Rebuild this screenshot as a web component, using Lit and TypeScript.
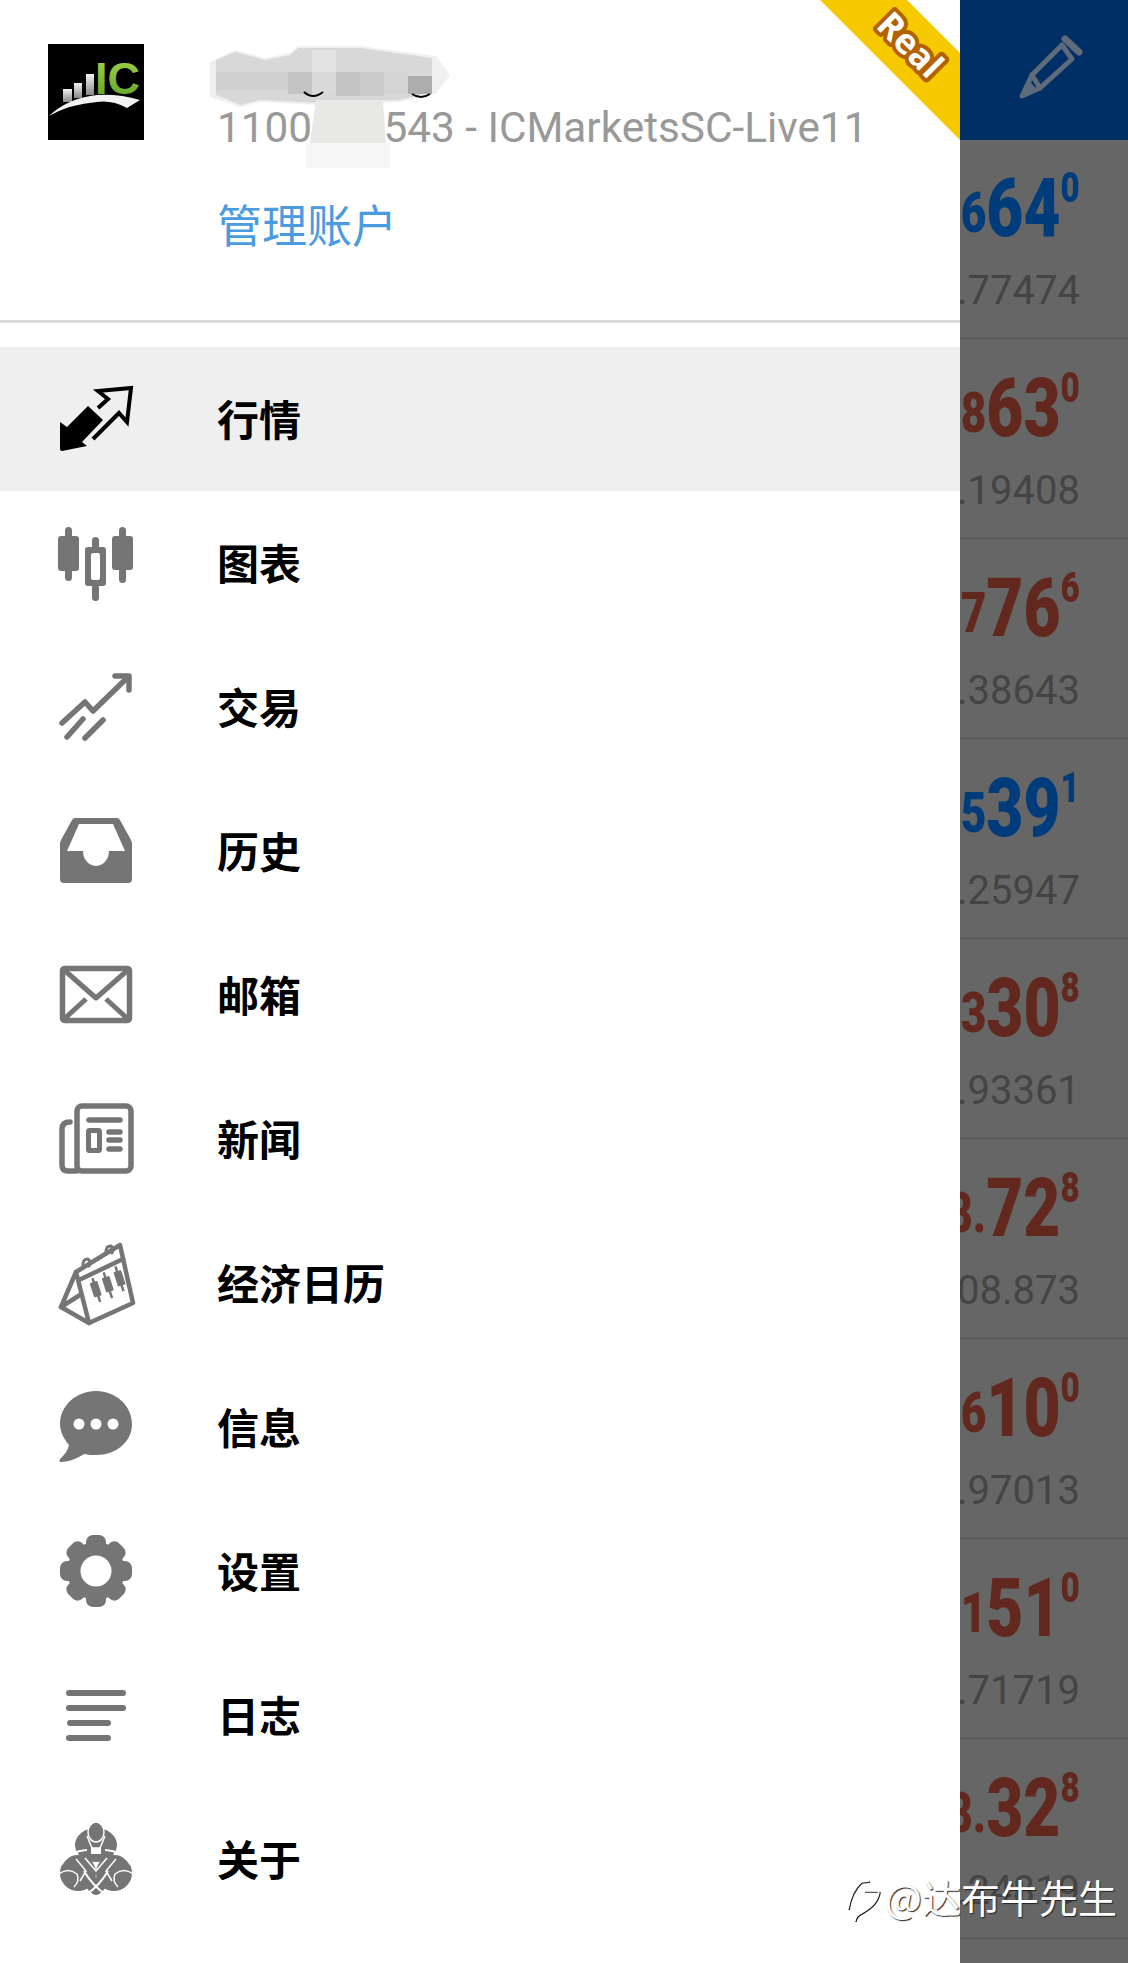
import { LitElement, html, css, svg } from "lit";
import { customElement } from "lit/decorators.js";

const G = "#757575";
const icons = [
  svg`<path d="M10 53 L17 58 L38 37 L53 51 L32 73 L37 77 L12 82 Q10 82 10 80 Z" fill="#000"/><path d="M48 39 L58 30 L48 22 L81 19 L77 53 L69 44 L43 70" fill="none" stroke="#000" stroke-width="4"/>`,
  svg`<g fill="${G}"><rect x="8" y="23" width="21" height="35" rx="3"/><rect x="15" y="14" width="7" height="54" rx="3.5"/><rect x="62" y="23" width="21" height="34" rx="3"/><rect x="69" y="14" width="7" height="56" rx="3.5"/><rect x="42" y="24" width="7" height="12" rx="3.5"/><rect x="42" y="71" width="7" height="17" rx="3.5"/><path fill-rule="evenodd" d="M38 34 H53 a3 3 0 0 1 3 3 V70 a3 3 0 0 1 -3 3 H38 a3 3 0 0 1 -3 -3 V37 a3 3 0 0 1 3 -3 Z M43 40 a2 2 0 0 0 -2 2 V65 a2 2 0 0 0 2 2 H48 a2 2 0 0 0 2 -2 V42 a2 2 0 0 0 -2 -2 Z"/></g>`,
  svg`<g fill="none" stroke="${G}" stroke-width="5.5" stroke-linecap="round" stroke-linejoin="round"><path d="M12 66 L35 45 L43 54 L77 21"/><path d="M65 19 H79 V33"/><path d="M33 62 L17 80"/><path d="M53 63 L35 81"/></g>`,
  svg`<path fill="${G}" fill-rule="evenodd" d="M25 17 H67 Q69 17 70 19 L81 39 Q82 41 82 43 V78 Q82 82 78 82 H14 Q10 82 10 78 V43 Q10 41 11 39 L22 19 Q23 17 25 17 Z M29 23 L17 50 H33 A13 15 0 0 0 59 50 H75 L63 23 Z"/>`,
  svg`<rect x="12.5" y="23.5" width="67" height="52" rx="2" fill="none" stroke="${G}" stroke-width="5.5"/><g fill="none" stroke="${G}" stroke-width="5" stroke-linejoin="round"><path d="M13 24 L46 53 L79 24"/><path d="M13 75 L36 54"/><path d="M79 75 L56 54"/></g>`,
  svg`<g fill="none" stroke="${G}" stroke-width="5.5" stroke-linecap="round"><rect x="27" y="17" width="54" height="65" rx="5"/><path d="M20 33 Q12 33 12 40 V76 Q12 82 18 82 H27"/><path d="M39 31 H70"/><path d="M59 43 H70"/><path d="M59 51 H70"/><path d="M59 60 H70"/><rect x="38.5" y="41.5" width="11" height="20" rx="1" stroke-width="5"/></g>`,
  svg`<g fill="none" stroke="${G}" stroke-width="4.5" stroke-linejoin="round" stroke-linecap="round"><path d="M26 39 L70 12 L83 70 L39 90 Z"/><path d="M26 39 L11 74 L39 90"/><path d="M11 74 L30 62"/><path d="M29 47 L73 26"/><path d="M33 34 Q32 26 38 26 Q41 28 39 33" stroke-width="3"/><path d="M56 21 Q55 13 61 13 Q64 15 62 20" stroke-width="3"/></g><g fill="${G}" transform="rotate(-18 57 52)"><rect x="41" y="45" width="8" height="15" rx="1"/><rect x="44" y="41" width="2.500" height="25"/><rect x="54" y="44" width="8" height="15" rx="1"/><rect x="56.500" y="39" width="2.500" height="27"/><rect x="67" y="42" width="8" height="15" rx="1"/><rect x="69.500" y="37" width="2.500" height="26"/></g>`,
  svg`<path fill="${G}" d="M46 14 C66 14 82 29 82 47 C82 65 66 78 46 78 C42 78 38 78 34 77 C28 81 19 85 11 85 C9 85 9 83 11 81 C15 77 18 73 19 68 C14 62 10 55 10 47 C10 29 26 14 46 14 Z"/><g fill="#fff"><circle cx="29" cy="47" r="5.5"/><circle cx="46" cy="47" r="5.5"/><circle cx="63" cy="47" r="5.5"/></g>`,
  svg`<g fill="${G}">${[0, 45, 90, 135, 180, 225, 270, 315].map((a) => svg`<rect x="36" y="14" width="20" height="20" rx="7" transform="rotate(${a} 46 50)"/>`)}<circle cx="46" cy="50" r="29"/></g><circle cx="46" cy="50" r="15.500" fill="#fff"/>`,
  svg`<g stroke="${G}" stroke-width="6" stroke-linecap="round"><path d="M19 28 H73"/><path d="M19 43 H73"/><path d="M20 58 H58"/><path d="M19 73 H58"/></g>`,
  svg`<g fill="${G}"><ellipse cx="46" cy="36" rx="21" ry="17"/><circle cx="28" cy="64" r="18"/><circle cx="64" cy="64" r="18"/><path d="M34 76 L46 68 L58 76 Q50 86 46 86 Q42 86 34 76 Z"/></g><g fill="none" stroke="#fff" stroke-width="1.500" stroke-linejoin="round"><ellipse cx="46" cy="23" rx="8" ry="10" fill="${G}"/><path d="M37 27 L42 39 H50 L55 27"/><rect x="41" y="39" width="10" height="6" fill="#fff" stroke="none"/><path d="M11 56 Q20 42 37 41 M81 56 Q72 42 55 41" stroke-width="2"/><path d="M35 49 L46 62 L57 49"/><path d="M26 50 L36 62 L30 72 M66 50 L56 62 L62 72"/><path d="M9 65 Q18 58 27 65 Q30 72 24 78 M83 65 Q74 58 65 65 Q62 72 68 78"/><path d="M34 62 Q42 76 56 86 M58 62 Q50 76 36 86" stroke-width="2"/></g>`,
];

const labels = ["行情", "图表", "交易", "历史", "邮箱", "新闻", "经济日历", "信息", "设置", "日志", "关于"];

const quotes: [string, string, string, string, string][] = [
  ["6", "64", "0", ".77474", "b"],
  ["8", "63", "0", ".19408", "r"],
  ["7", "76", "6", ".38643", "r"],
  ["5", "39", "1", ".25947", "b"],
  ["3", "30", "8", ".93361", "r"],
  ["8.", "72", "8", "08.873", "r"],
  ["6", "10", "0", ".97013", "r"],
  ["1", "51", "0", ".71719", "r"],
  ["8.", "32", "8", ".24819", "r"],
];

@customElement("app-root")
export class AppRoot extends LitElement {
  static styles = css`
    :host { display: block; width: 1128px; height: 1963px; position: relative; overflow: hidden; }
    * { box-sizing: border-box; }
    .page { display: flex; height: 1963px; font-family: Roboto, "Noto Sans CJK SC", sans-serif; }
    .drawer { width: 960px; flex: none; background: #fff; position: relative; }
    .head { height: 323px; border-bottom: 3px solid #dcdcdc; display: flex; padding: 44px 0 0 48px; margin-bottom: 24px; }
    .logo { width: 96px; height: 96px; background: #000; flex: none; display: block; }
    .head-text { margin-left: 73px; padding-top: 59px; }
    .acct { font-size: 42.3px; line-height: 50px; color: #999; font-weight: 400; white-space: nowrap; }
    .manage { margin-top: 44px; font-size: 45px; line-height: 54px; color: #4a9be0; font-family: "Noto Sans CJK SC", sans-serif; }
    .row { height: 144px; display: flex; align-items: center; padding-left: 50px; }
    .row.active { background: #efefef; }
    .row svg { width: 90px; height: 100px; flex: none; display: block; }
    .row span { margin: -2px 0 0 77px; font: 700 42px/1 "Noto Sans CJK SC", sans-serif; color: #000; }
    .mosaic { position: absolute; left: 200px; top: 40px; display: block; }
    .ribbon { position: absolute; right: 0; top: 0; display: block; }
    .ribbon text { font: 700 35px "Open Sans", sans-serif; fill: #fff; stroke: #b36200; stroke-width: 8px; paint-order: stroke; stroke-linejoin: round; }
    .panel { flex: 1; min-width: 0; background: #666; overflow: hidden; }
    .top { height: 140px; background: #002f66; display: flex; align-items: center; justify-content: center; }
    .top svg { width: 90px; height: 100px; display: block; }
    .q { height: 200px; border-bottom: 3px solid #5c5c5c; padding-right: 48px; display: flex; flex-direction: column; align-items: flex-end; white-space: nowrap; }
    .big { height: 122px; display: flex; align-items: flex-start; justify-content: flex-end; font-weight: 900; transform: scaleX(0.79); transform-origin: right top; }
    .big .a { font-size: 56px; line-height: 72px; margin-top: 37px; }
    .big .b { font-size: 81px; line-height: 80px; margin-top: 29px; }
    .big .c { font-size: 42px; line-height: 44px; margin-top: 26px; }
    .b-c { color: #003c7c; }
    .r-c { color: #62271d; }
    .sub { font-size: 40px; line-height: 48px; color: #444; margin-top: -24px; padding-top: 29px; }
    .mark { position: absolute; left: 843px; top: 1869px; display: flex; align-items: center; font: 400 39px/48px "Noto Sans CJK SC", sans-serif; color: #fff; text-shadow: 1px 1px 1px #222; }
    .mark svg { display: block; filter: drop-shadow(1px 1px 0.5px #222); margin-top: 10px; }
  `;

  render() {
    return html`
      <div class="page">
        <div class="drawer">
          <div class="head">
            <svg class="logo" viewBox="0 0 96 96">
              <defs>
                <linearGradient id="bar" x1="0" y1="0" x2="0" y2="1"><stop offset="0" stop-color="#f4f4f4"/><stop offset="1" stop-color="#888"/></linearGradient>
                <linearGradient id="gr" x1="0" y1="0" x2="0" y2="1"><stop offset="0" stop-color="#a8d44a"/><stop offset="1" stop-color="#5aa024"/></linearGradient>
              </defs>
              <rect x="15" y="45" width="9" height="13" fill="url(#bar)"/>
              <rect x="26" y="39" width="8" height="15" fill="url(#bar)"/>
              <rect x="38" y="30" width="8" height="21" fill="url(#bar)"/>
              <text x="47" y="50" font-family="Liberation Sans" font-weight="700" font-size="45" fill="url(#gr)">IC</text>
              <path d="M1 72 Q20 54 49 51 Q72 50 92 56 L79 64 Q64 56 49 58 Q22 60 1 72 Z" fill="#f2f2f2"/>
            </svg>
            <div class="head-text">
              <div class="acct">1100000543 - ICMarketsSC-Live11</div>
              <div class="manage">管理账户</div>
            </div>
          </div>
          ${labels.map(
            (l, i) => html`<div class="row ${i === 0 ? "active" : ""}">
              <svg viewBox="0 0 90 100">${icons[i]}</svg>
              <span>${l}</span>
            </div>`
          )}
          <svg class="mosaic" width="260" height="140" viewBox="200 40 260 140">
            <path d="M210 62 L235 50 L265 58 L290 53 L298 46 L360 46 L436 56 L450 75 L436 94 L400 102 L320 105 L260 102 L240 107 L210 97 Z" fill="#f0f0f0"/>
            <path d="M216 60 L235 52 L265 60 L290 55 L298 48 L360 48 L432 58 L432 92 L400 100 L320 103 L260 100 L240 105 L216 95 Z" fill="#d8d8d8"/>
            <rect x="216" y="72" width="72" height="18" fill="#cfcfcf"/>
            <rect x="288" y="72" width="24" height="22" fill="#c4c4c4"/>
            <rect x="312" y="50" width="24" height="22" fill="#e3e3e3"/>
            <rect x="312" y="72" width="24" height="22" fill="#dadada"/>
            <rect x="336" y="72" width="24" height="24" fill="#c4c4c4"/>
            <rect x="360" y="72" width="24" height="24" fill="#cbcbcb"/>
            <rect x="384" y="72" width="24" height="22" fill="#d4d4d4"/>
            <rect x="408" y="76" width="24" height="18" fill="#adadad"/>
            <path d="M316 100 H383 L386 143 H310 Z" fill="#e8e8e6"/>
            <rect x="306" y="143" width="84" height="25" fill="#f6f6f6"/>
            <path d="M304 92 Q313 100 323 92 M412 94 Q421 100 430 94" fill="none" stroke="#000" stroke-width="2"/>
          </svg>
          <svg class="ribbon" width="140" height="140" viewBox="820 0 140 140">
            <path d="M820 0 H907 L960 53 V140 Z" fill="#f6c900"/>
            <text x="910" y="57" text-anchor="middle" transform="rotate(45 910 45)">Real</text>
          </svg>
        </div>
        <div class="panel">
          <div class="top">
            <svg viewBox="0 0 90 100"><g fill="none" stroke="#5f6a7b" stroke-width="5" stroke-linejoin="round" stroke-linecap="round"><path d="M23 76 L33 55 L63 25 L73 39 L41 68 Z"/><path d="M33 55 L41 68"/><path d="M66 19 L80 32" stroke-width="7"/></g><path d="M23 76 L30 60 L38 70 Z" fill="#5f6a7b"/></svg>
          </div>
          ${quotes.map(
            ([a, b, c, s, col]) => html`<div class="q">
              <div class="big ${col}-c"><span class="a">${a}</span><span class="b">${b}</span><span class="c">${c}</span></div>
              <div class="sub">${s}</div>
            </div>`
          )}
        </div>
      </div>
      <div class="mark">
        <svg width="42" height="44" viewBox="0 0 42 44"><path d="M5 30 Q8 12 18 3 L26 2 M21 12 H36 M36 12 Q35 25 18 34 Q12 37 12 42" fill="none" stroke="#fff" stroke-width="1.6"/></svg>
        <span>@达布牛先生</span>
      </div>
    `;
  }
}
